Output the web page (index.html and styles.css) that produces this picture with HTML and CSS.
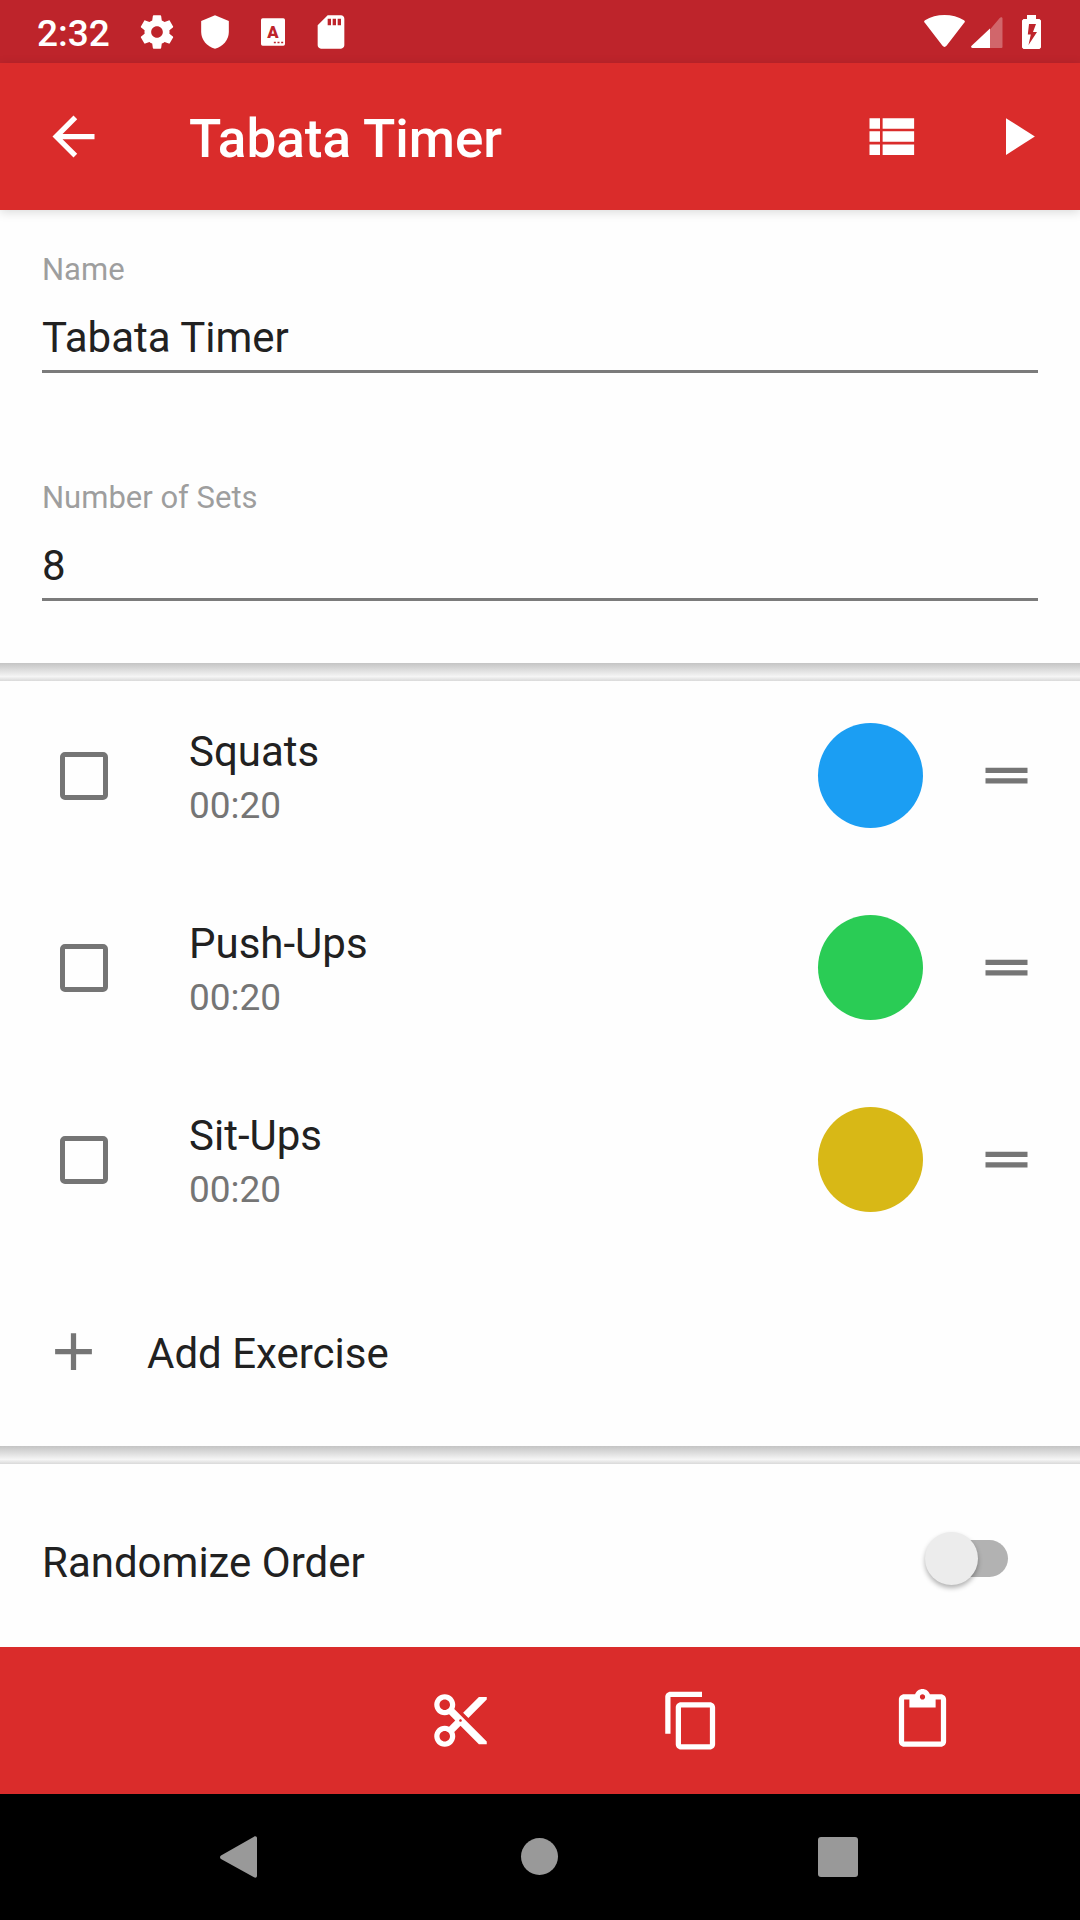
FILE: index.html
```html
<!DOCTYPE html>
<html lang="en">
<head>
  <meta charset="UTF-8" />
  <meta name="viewport" content="width=device-width, initial-scale=1.0"/>
  <title>Tabata Timer</title>
  <link rel="stylesheet" href="styles.css">
</head>
<body>
  <div class="status-bar">
    <span class="clock">2:32</span>
    <div class="notifications">
      <svg viewBox="0 0 24 24"><path d="M19.43 12.98c.04-.32.07-.64.07-.98s-.03-.66-.07-.98l2.11-1.65c.19-.15.24-.42.12-.64l-2-3.46c-.12-.22-.39-.3-.61-.22l-2.49 1c-.52-.4-1.08-.73-1.69-.98l-.38-2.65C14.46 2.18 14.25 2 14 2h-4c-.25 0-.46.18-.49.42l-.38 2.65c-.61.25-1.17.59-1.69.98l-2.49-1c-.23-.09-.49 0-.61.22l-2 3.46c-.13.22-.07.49.12.64l2.11 1.65c-.04.32-.07.65-.07.98s.03.66.07.98l-2.11 1.65c-.19.15-.24.42-.12.64l2 3.46c.12.22.39.3.61.22l2.49-1c.52.4 1.08.73 1.69.98l.38 2.65c.03.24.24.42.49.42h4c.25 0 .46-.18.49-.42l.38-2.65c.61-.25 1.17-.59 1.69-.98l2.49 1c.23.09.49 0 .61-.22l2-3.46c.12-.22.07-.49-.12-.64l-2.11-1.65zM12 15.5c-1.93 0-3.5-1.57-3.5-3.5s1.57-3.5 3.5-3.5 3.5 1.57 3.5 3.5-1.57 3.5-3.5 3.5z"/></svg>
      <svg viewBox="0 0 24 24"><path d="M12 2L3.7 5.4v6.4c0 4.8 3.4 8.9 8.3 10.2 4.9-1.3 8.3-5.4 8.3-10.2V5.4z"/></svg>
      <svg viewBox="0 0 24 24">
        <rect x="4.8" y="3.8" width="14.4" height="16.4" rx="1"/>
        <text class="keyboard-letter" x="12" y="15.6">A</text>
        <path class="keyboard-dots" d="M12.5 18.3h1.2M14.7 18.3h1.2M16.9 18.3h1.2"/>
      </svg>
      <svg viewBox="0 0 24 24"><path d="M18 2h-8L4 8v12c0 1.1.9 2 2 2h12c1.1 0 2-.9 2-2V4c0-1.1-.9-2-2-2zm-6 6h-2V4h2v4zm3 0h-2V4h2v4zm3 0h-2V4h2v4z"/></svg>
    </div>
    <div class="system">
      <svg width="41" height="34" viewBox="0 0 41 34"><path d="M1 8C-.2 7-.2 6 1 5.200C12-1.700 29-1.700 40 5.200c1.200.8 1.200 1.800 0 2.800L22.500 30.800c-1.200 1.500-2.800 1.500-4 0z"/></svg>
      <svg width="32" height="34" viewBox="0 0 32 34"><path opacity=".3" d="M19 14.500L28.700 3c1-1.200 2.800-1 2.800.5V32a1 1 0 0 1-1 1H19z"/><path d="M19 13.500V33H1.500C0 33-.3 31.700.6 30.700z"/></svg>
      <svg class="battery" width="19" height="34" viewBox="0 0 19 34"><path fill-rule="evenodd" d="M5 0h9v4h3.500L19 5.500v27L17.500 34h-16L0 32.500v-27L1.500 4H5zM7 9l-1.200 10.500h3L6.500 30 15 17h-4l3-8z"/></svg>
    </div>
  </div>

  <header class="app-bar">
    <button class="icon-button" aria-label="Back">
      <svg viewBox="0 0 24 24"><path d="M20 11H7.83l5.59-5.59L12 4l-8 8 8 8 1.41-1.41L7.83 13H20v-2z"/></svg>
    </button>
    <h1>Tabata Timer</h1>
    <div class="app-actions">
      <button class="icon-button" aria-label="Exercise list">
        <svg viewBox="0 0 24 24"><path d="M4 14h4v-4H4v4zm0 5h4v-4H4v4zM4 9h4V5H4v4zm5 5h12v-4H9v4zm0 5h12v-4H9v4zM9 5v4h12V5H9z"/></svg>
      </button>
      <button class="icon-button" aria-label="Start">
        <svg viewBox="0 0 24 24"><path d="M8 5v14l11-7z"/></svg>
      </button>
    </div>
  </header>

  <main>
    <section class="fields">
      <div class="field">
        <label for="name">Name</label>
        <input type="text" id="name" value="Tabata Timer" />
      </div>
      <div class="field">
        <label for="sets">Number of Sets</label>
        <input type="text" inputmode="numeric" id="sets" value="8" />
      </div>
    </section>

    <section class="exercises">
      <div class="exercise">
        <input type="checkbox" id="squats" />
        <label for="squats">Squats <small>00:20</small></label>
        <button class="color blue" aria-label="Squats color"></button>
        <button class="icon-button drag" aria-label="Move Squats">
          <svg viewBox="0 0 24 24"><path d="M20 9H4v2h16V9zM4 15h16v-2H4v2z"/></svg>
        </button>
      </div>
      <div class="exercise">
        <input type="checkbox" id="push-ups" />
        <label for="push-ups">Push-Ups <small>00:20</small></label>
        <button class="color green" aria-label="Push-Ups color"></button>
        <button class="icon-button drag" aria-label="Move Push-Ups">
          <svg viewBox="0 0 24 24"><path d="M20 9H4v2h16V9zM4 15h16v-2H4v2z"/></svg>
        </button>
      </div>
      <div class="exercise">
        <input type="checkbox" id="sit-ups" />
        <label for="sit-ups">Sit-Ups <small>00:20</small></label>
        <button class="color yellow" aria-label="Sit-Ups color"></button>
        <button class="icon-button drag" aria-label="Move Sit-Ups">
          <svg viewBox="0 0 24 24"><path d="M20 9H4v2h16V9zM4 15h16v-2H4v2z"/></svg>
        </button>
      </div>
      <button class="add">
        <svg viewBox="0 0 24 24"><path d="M19 13h-6v6h-2v-6H5v-2h6V5h2v6h6v2z"/></svg>
        <span>Add Exercise</span>
      </button>
    </section>

    <section class="option">
      <label for="randomize">Randomize Order</label>
      <input type="checkbox" role="switch" class="switch" id="randomize" />
    </section>
  </main>

  <footer class="edit-bar">
    <button class="icon-button" aria-label="Cut">
      <svg viewBox="0 0 24 24"><path d="M9.64 7.64c.23-.5.36-1.05.36-1.64 0-2.21-1.79-4-4-4S2 3.79 2 6s1.79 4 4 4c.59 0 1.14-.13 1.64-.36L10 12l-2.36 2.36C7.14 14.13 6.59 14 6 14c-2.21 0-4 1.79-4 4s1.79 4 4 4 4-1.79 4-4c0-.59-.13-1.14-.36-1.64L12 14l7 7h3v-1L9.64 7.64zM6 8c-1.1 0-2-.89-2-2s.9-2 2-2 2 .89 2 2-.9 2-2 2zm0 12c-1.1 0-2-.89-2-2s.9-2 2-2 2 .89 2 2-.9 2-2 2zm6-7.500c-.28 0-.5-.22-.5-.5s.22-.5.5-.5.5.22.5.5-.22.5-.5.5zM19 3l-6 6 2 2 7-7V3z"/></svg>
    </button>
    <button class="icon-button" aria-label="Copy">
      <svg viewBox="0 0 24 24"><path d="M16 1H4c-1.1 0-2 .9-2 2v14h2V3h12V1zm3 4H8c-1.1 0-2 .9-2 2v14c0 1.1.9 2 2 2h11c1.1 0 2-.9 2-2V7c0-1.1-.9-2-2-2zm0 16H8V7h11v14z"/></svg>
    </button>
    <button class="icon-button" aria-label="Paste">
      <svg viewBox="0 0 24 24"><path d="M19 2h-4.18C14.4.84 13.3 0 12 0c-1.3 0-2.4.84-2.82 2H5c-1.1 0-2 .9-2 2v16c0 1.1.9 2 2 2h14c1.1 0 2-.9 2-2V4c0-1.1-.9-2-2-2zm-7 0c.55 0 1 .45 1 1s-.45 1-1 1-1-.45-1-1 .45-1 1-1zm7 18H5V4h2v3h10V4h2v16z"/></svg>
    </button>
  </footer>

  <nav class="nav-bar">
    <button class="icon-button" aria-label="Back">
      <svg viewBox="0 0 63 63"><path d="M11 33c-1.300-1-1.300-2.500 0-3.500L44 10.700c1.500-.9 3-.2 3 1.500v37.600c0 1.700-1.500 2.400-3 1.500z"/></svg>
    </button>
    <button class="icon-button" aria-label="Home">
      <svg viewBox="0 0 63 63"><circle cx="30.500" cy="30.500" r="18.500"/></svg>
    </button>
    <button class="icon-button" aria-label="Recents">
      <svg viewBox="0 0 63 63"><rect x="10" y="11" width="40" height="40" rx="3"/></svg>
    </button>
  </nav>
</body>
</html>
```
FILE: styles.css
```css
* {
  box-sizing: border-box;
}

body {
  margin: 0;
  height: 100vh;
  display: flex;
  flex-direction: column;
  font-family: Roboto, sans-serif;
  font-size: 42px;
  line-height: 50px;
  color: #212121;
  background-color: #fefefe;
}

button,
input {
  margin: 0;
  padding: 0;
  border: none;
  border-radius: 0;
  background: none;
  font: inherit;
  color: inherit;
}

button {
  cursor: pointer;
}

svg {
  display: block;
  flex-shrink: 0;
  fill: currentColor;
}

.icon-button,
.icon-button svg,
.add svg {
  width: 63px;
  height: 63px;
}

/* Status bar */
.status-bar {
  height: 63px;
  flex-shrink: 0;
  display: flex;
  align-items: center;
  padding: 0 39px 0 37px;
  background-color: #be242b;
  color: white;
}

.clock {
  padding-top: 4px;
  font-size: 37px;
  font-weight: 500;
  line-height: 44px;
}

.notifications {
  display: flex;
  gap: 18px;
  margin-left: 27px;
}

.notifications svg {
  width: 40px;
  height: 40px;
}

.keyboard-letter {
  font-size: 10px;
  font-weight: 900;
  text-anchor: middle;
  fill: #be242b;
}

.keyboard-dots {
  stroke: #be242b;
  stroke-width: 1;
}

.system {
  display: flex;
  gap: 6px;
  margin-left: auto;
}

.battery {
  margin-left: 13px;
}

/* App bar */
.app-bar {
  height: 147px;
  flex-shrink: 0;
  display: flex;
  align-items: center;
  padding: 0 32px 0 42px;
  background-color: #da2c2b;
  color: white;
  box-shadow: 0 2px 10px rgba(0, 0, 0, 0.15);
  z-index: 1;
}

h1 {
  flex: 1;
  margin: 0 0 0 84px;
  padding-top: 4px;
  font-size: 53px;
  font-weight: 500;
  line-height: 62px;
}

.app-actions {
  display: flex;
  gap: 63px;
}

/* Content */
main {
  flex: 1;
  min-height: 0;
  overflow: hidden;
}

section + section::before {
  content: "";
  display: block;
  width: 100%;
  height: 18px;
  background: linear-gradient(#c4c4c4, #f5f5f5 75%, #d9d9d9);
}

.fields {
  display: flex;
  flex-direction: column;
  gap: 106px;
  padding: 41px 42px 62px;
}

.field {
  display: flex;
  flex-direction: column;
}

.field label {
  font-size: 31px;
  line-height: 38px;
  color: #9e9e9e;
}

.field input {
  height: 84px;
  padding-top: 16px;
  border-bottom: 3px solid #7b7b7b;
  outline: none;
}

.exercises {
  display: flex;
  flex-direction: column;
}

.exercise {
  height: 189px;
  margin-bottom: 3px;
  display: flex;
  align-items: center;
  padding: 0 42px 0 60px;
}

.exercise input {
  appearance: none;
  width: 48px;
  height: 48px;
  border: 5px solid #757575;
  border-radius: 5px;
}

.exercise input:checked {
  background-color: #757575;
}

.exercise label {
  flex: 1;
  display: flex;
  flex-direction: column;
  gap: 4px;
  margin-left: 81px;
  padding-top: 2px;
  line-height: 54px;
}

.exercise small {
  font-size: 37px;
  line-height: 46px;
  color: #757575;
}

.color {
  width: 105px;
  height: 105px;
  border-radius: 50%;
}

.blue {
  background-color: #1b9ef3;
}

.green {
  background-color: #2acc55;
}

.yellow {
  background-color: #d8b816;
}

.drag {
  margin-left: 52px;
  color: #757575;
}

.add {
  height: 189px;
  display: flex;
  align-items: center;
  gap: 42px;
  padding: 0 42px;
  text-align: left;
}

.add svg {
  color: #757575;
}

.add span {
  padding-top: 4px;
}

.option {
  display: flex;
  flex-wrap: wrap;
  align-items: center;
  justify-content: space-between;
}

.option label {
  padding: 74px 0 64px 42px;
}

.switch {
  appearance: none;
  position: relative;
  width: 78px;
  height: 37px;
  margin-right: 72px;
  border-radius: 19px;
  background-color: #b2b2b2;
}

.switch::before {
  content: "";
  position: absolute;
  top: -8px;
  left: -5px;
  width: 53px;
  height: 53px;
  border-radius: 50%;
  background-color: #ececec;
  box-shadow: 0 3px 5px rgba(0, 0, 0, 0.3);
}

.switch:checked::before {
  left: 30px;
}

/* Bottom bars */
.edit-bar {
  height: 147px;
  flex-shrink: 0;
  display: flex;
  align-items: center;
  justify-content: flex-end;
  gap: 168px;
  padding-right: 126px;
  background-color: #da2c2b;
  color: white;
}

.nav-bar {
  height: 126px;
  flex-shrink: 0;
  display: flex;
  align-items: center;
  justify-content: center;
  gap: 236px;
  background-color: black;
  color: #999;
}
```
